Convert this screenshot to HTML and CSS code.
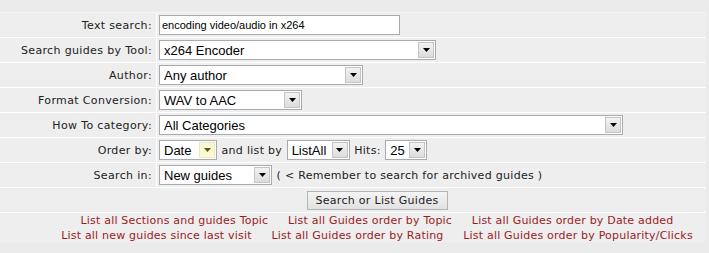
FILE: index.html
```html
<!DOCTYPE html>
<html lang="en">
<head>
    <meta charset="UTF-8">
    <title>Search guides</title>
    <link rel="stylesheet" href="styles.css">
</head>
<body>
    <form class="search-form">
        <table class="search">
            <tr>
                <td class="lbl">Text search:</td>
                <td class="val"><input type="text" class="text" value="encoding video/audio in x264"></td>
            </tr>
            <tr>
                <td class="lbl">Search guides by Tool:</td>
                <td class="val">
                    <span class="pick w-tool">
                        <select><option>x264 Encoder</option></select>
                        <span class="arrow"><svg width="7" height="4" viewBox="0 0 7 4"><path d="M0 0h7L3.5 4z"/></svg></span>
                    </span>
                </td>
            </tr>
            <tr>
                <td class="lbl">Author:</td>
                <td class="val">
                    <span class="pick w-author">
                        <select><option>Any author</option></select>
                        <span class="arrow"><svg width="7" height="4" viewBox="0 0 7 4"><path d="M0 0h7L3.5 4z"/></svg></span>
                    </span>
                </td>
            </tr>
            <tr>
                <td class="lbl">Format Conversion:</td>
                <td class="val">
                    <span class="pick w-format">
                        <select><option>WAV to AAC</option></select>
                        <span class="arrow"><svg width="7" height="4" viewBox="0 0 7 4"><path d="M0 0h7L3.5 4z"/></svg></span>
                    </span>
                </td>
            </tr>
            <tr>
                <td class="lbl">How To category:</td>
                <td class="val">
                    <span class="pick w-cat">
                        <select><option>All Categories</option></select>
                        <span class="arrow"><svg width="7" height="4" viewBox="0 0 7 4"><path d="M0 0h7L3.5 4z"/></svg></span>
                    </span>
                </td>
            </tr>
            <tr>
                <td class="lbl">Order by:</td>
                <td class="val">
                    <span class="pick w-order">
                        <select><option>Date</option></select>
                        <span class="arrow hot"><svg width="7" height="4" viewBox="0 0 7 4"><path d="M0 0h7L3.5 4z"/></svg></span>
                    </span>
                    <span class="note">and list by</span>
                    <span class="pick w-list">
                        <select><option>ListAll</option></select>
                        <span class="arrow"><svg width="7" height="4" viewBox="0 0 7 4"><path d="M0 0h7L3.5 4z"/></svg></span>
                    </span>
                    <span class="note">Hits:</span>
                    <span class="pick w-hits">
                        <select><option>25</option></select>
                        <span class="arrow"><svg width="7" height="4" viewBox="0 0 7 4"><path d="M0 0h7L3.5 4z"/></svg></span>
                    </span>
                </td>
            </tr>
            <tr>
                <td class="lbl">Search in:</td>
                <td class="val">
                    <span class="pick w-in">
                        <select><option>New guides</option></select>
                        <span class="arrow"><svg width="7" height="4" viewBox="0 0 7 4"><path d="M0 0h7L3.5 4z"/></svg></span>
                    </span>
                    <span class="note">( &lt; Remember to search for archived guides )</span>
                </td>
            </tr>
            <tr>
                <td class="center" colspan="2"><button type="button" class="btn">Search or List Guides</button></td>
            </tr>
            <tr class="links-row">
                <td class="center links" colspan="2">
                    <a href="#">List all Sections and guides Topic</a>
                    <a href="#">List all Guides order by Topic</a>
                    <a href="#">List all Guides order by Date added</a><br>
                    <a href="#">List all new guides since last visit</a>
                    <a href="#">List all Guides order by Rating</a>
                    <a href="#">List all Guides order by Popularity/Clicks</a>
                </td>
            </tr>
        </table>
    </form>
</body>
</html>
```

FILE: styles.css
```css
body {
    margin: 0;
    background: #ebebeb;
    font-family: "DejaVu Sans", Verdana, sans-serif;
    font-size: 11px;
    color: #222;
}
.search-form {
    margin: 0;
    padding-top: 12px;
}
.search {
    width: 706px;
    border-collapse: separate;
    border-spacing: 0;
    background: #eeeeee;
    border-top: 1px solid #f5f5f5;
}
.search td {
    height: 24px;
    padding: 0;
    border-bottom: 1px solid #fff;
    vertical-align: middle;
    white-space: nowrap;
}
.search .lbl {
    width: 152px;
    padding-right: 4px;
    text-align: right;
    letter-spacing: 0.35px;
    border-right: 1px solid #fff;
}
.search .val {
    padding-left: 2px;
}
.search .center {
    text-align: center;
    padding-left: 48px;
}
.text {
    box-sizing: border-box;
    width: 241px;
    height: 20px;
    margin: 0;
    padding: 0 2px;
    border: 1px solid #a7abb0;
    font-family: "Liberation Sans", Arial, sans-serif;
    font-size: 11px;
    color: #000;
    vertical-align: middle;
}
.pick {
    display: inline-flex;
    align-items: center;
    box-sizing: border-box;
    height: 20px;
    border: 1px solid #a7abb0;
    background: #fff;
    vertical-align: middle;
}
.pick select {
    flex: 1;
    min-width: 0;
    height: 18px;
    margin: 0;
    padding: 0 0 0 4px;
    border: none;
    outline: none;
    background: transparent;
    -webkit-appearance: none;
    appearance: none;
    font-family: "Liberation Sans", Arial, sans-serif;
    font-size: 13px;
    color: #000;
}
.arrow {
    display: flex;
    align-items: center;
    justify-content: center;
    box-sizing: border-box;
    width: 16px;
    height: 16px;
    margin-right: 1px;
    border: 1px solid #c4c4c4;
    background: linear-gradient(#f2f2f2, #dcdcdc);
}
.arrow svg {
    fill: #000;
}
.arrow.hot {
    border-color: #ecebc4;
    background: #faf8d2;
}
.arrow.hot svg {
    fill: #5c5a10;
}
.w-tool { width: 277px; }
.w-author { width: 204px; }
.w-format { width: 143px; }
.w-cat { width: 464px; }
.w-order { width: 58px; }
.w-list { width: 63px; }
.w-hits { width: 42px; }
.w-in { width: 113px; }
.note {
    vertical-align: middle;
    margin: 0 1px;
    letter-spacing: 0.3px;
}
.btn {
    box-sizing: border-box;
    width: 141px;
    height: 19px;
    padding: 0;
    border: 1px solid #b4b4b4;
    background: linear-gradient(#f4f4f4, #e2e2e2);
    font-family: "DejaVu Sans", Verdana, sans-serif;
    font-size: 11px;
    letter-spacing: 0.3px;
    color: #222;
}
.links-row td {
    height: 30px;
    border-bottom: none;
}
.links {
    line-height: 15px;
    letter-spacing: 0.2px;
}
.links a {
    color: #9b1c24;
    text-decoration: none;
    margin: 0 8px;
}
```
